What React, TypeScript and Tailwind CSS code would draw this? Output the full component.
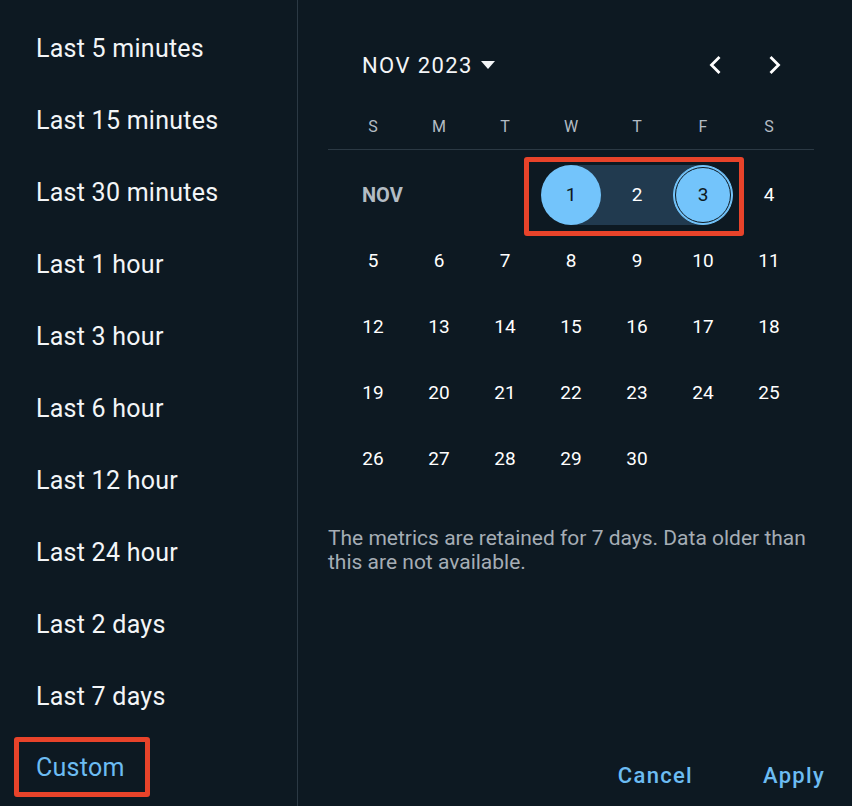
const ranges = [
    'Last 5 minutes',
    'Last 15 minutes',
    'Last 30 minutes',
    'Last 1 hour',
    'Last 3 hour',
    'Last 6 hour',
    'Last 12 hour',
    'Last 24 hour',
    'Last 2 days',
    'Last 7 days',
]

const weekdays = ['S', 'M', 'T', 'W', 'T', 'F', 'S']

const weeks: (number | null)[][] = [
    [5, 6, 7, 8, 9, 10, 11],
    [12, 13, 14, 15, 16, 17, 18],
    [19, 20, 21, 22, 23, 24, 25],
    [26, 27, 28, 29, 30, null, null],
]

function Chevron({ dir }: { dir: 'left' | 'right' }) {
    return (
        <svg viewBox="0 0 14 20" className="w-[14px] h-[20px]" fill="none" stroke="currentColor" strokeWidth={2.8} strokeLinecap="square">
            {dir === 'left'
                ? <polyline points="10.5,3 3.5,10 10.5,17" />
                : <polyline points="3.5,3 10.5,10 3.5,17" />}
        </svg>
    )
}

export default function App() {
    return (
        <div className="flex w-[852px] h-[806px] bg-[#0d1922] overflow-hidden" style={{ fontFamily: 'Roboto, "Liberation Sans", sans-serif' }}>
            {/* presets */}
            <div className="w-[298px] shrink-0 border-r border-[#2b3944] flex flex-col pt-[12px]">
                {ranges.map(r => (
                    <button key={r} type="button" className="h-[72px] shrink-0 flex items-center pl-[36px] text-left text-[25px] leading-none tracking-[0.25px] text-[#f3f5f7]">
                        {r}
                    </button>
                ))}
                <div className="pl-[14px] pt-[5px]">
                    <div className="w-[136px] h-[60px] border-[5px] border-[#e8432a] rounded-[3px] flex items-center pl-[17px] text-[25px] leading-none tracking-[0.25px] text-[#6cbcf2]">
                        Custom
                    </div>
                </div>
            </div>

            {/* calendar */}
            <div className="flex-1 flex flex-col pl-[30px] pr-[38px]">
                <div className="flex items-center justify-between h-[60px] mt-[35px] pl-[34px] pr-[36px]">
                    <button type="button" className="flex items-center gap-[8px] text-[22px] tracking-[1.4px] text-[#f3f5f7]">
                        NOV 2023
                        <svg viewBox="0 0 14 8" className="w-[14px] h-[8px] fill-current"><path d="M0 0h14L7 8z" /></svg>
                    </button>
                    <div className="flex items-center gap-[46px] text-white">
                        <Chevron dir="left" />
                        <Chevron dir="right" />
                    </div>
                </div>

                <div className="grid grid-cols-7 w-[462px] ml-[12px] h-[24px] mt-[20px] items-center text-[16px] text-[#b3bcc4]">
                    {weekdays.map((d, i) => (
                        <span key={i} className="text-center">{d}</span>
                    ))}
                </div>
                <div className="h-px bg-[#2b3944] w-[486px] mt-[10px]" />

                {/* first week with range */}
                <div className="grid grid-cols-7 w-[462px] ml-[12px] h-[66px] mt-[12px] items-center text-[19px] text-white">
                    <span className="col-span-3 pl-[22px] text-[20px] font-bold text-[#b3bcc4]">NOV</span>
                    <div className="col-span-3 relative flex items-center h-[60px]">
                        <div className="absolute left-[33px] right-[33px] inset-y-0 bg-[#213a4f]" />
                        <div className="absolute -left-[14px] -right-[8px] -top-[8px] -bottom-[11px] border-[5px] border-[#e8432a] rounded-[3px]" />
                        <div className="relative w-[66px] flex justify-center">
                            <span className="w-[60px] h-[60px] rounded-full bg-[#73c4fb] flex items-center justify-center text-[#0d1922]">1</span>
                        </div>
                        <div className="relative w-[66px] flex justify-center">2</div>
                        <div className="relative w-[66px] flex justify-center">
                            <span className="w-[60px] h-[60px] rounded-full bg-[#73c4fb] border border-[#73c4fb] flex items-center justify-center text-[#0d1922]">
                                <span className="w-[56px] h-[56px] rounded-full border-[1.5px] border-[#0d1922] flex items-center justify-center">3</span>
                            </span>
                        </div>
                    </div>
                    <span className="text-center">4</span>
                </div>

                {weeks.map((w, i) => (
                    <div key={i} className="grid grid-cols-7 w-[462px] ml-[12px] h-[66px] items-center text-[19px] text-white">
                        {w.map((d, j) => (
                            <span key={j} className="text-center">{d ?? ''}</span>
                        ))}
                    </div>
                ))}

                <p className="mt-[34px] w-[490px] text-[21px] leading-[24px] text-[#a5adb5]">
                    The metrics are retained for 7 days. Data older than this are not available.
                </p>

                <div className="mt-auto mb-[14px] flex justify-end gap-[70px] text-[22px] font-medium tracking-[1.3px] text-[#6cbcf2]">
                    <button type="button">Cancel</button>
                    <button type="button" className="-mr-[7px]">Apply</button>
                </div>
            </div>
        </div>
    )
}
